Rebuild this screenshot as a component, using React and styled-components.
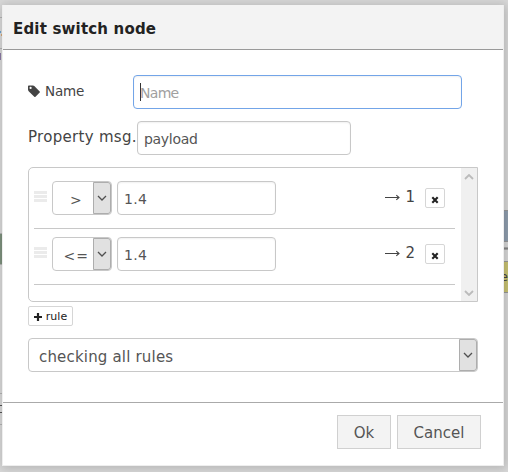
import React from "react";
import styled, { createGlobalStyle } from "styled-components";

const Global = createGlobalStyle`
  *, *::before, *::after { box-sizing: border-box; }
  html, body { margin: 0; height: 472px; overflow: hidden; background: #d8d8d8; }
  body { font-family: Verdana, "DejaVu Sans", sans-serif; font-size: 14px; color: #444; }
`;

const Workspace = styled.main`
  position: relative;
  width: 508px;
  height: 472px;
  padding: 5px 4px 6px 2px;
  overflow: hidden;
  background: #dadada;
`;

const CanvasPiece = styled.span`
  position: absolute;
  left: ${(p) => p.$x}px;
  top: ${(p) => p.$y}px;
  width: ${(p) => p.$w}px;
  height: ${(p) => p.$h}px;
  background: ${(p) => p.$fill || "transparent"};
  border: solid ${(p) => p.$line || "#b4b4b4"};
  border-width: 1px 0;
  font-size: 13px;
  line-height: ${(p) => p.$h - 3}px;
  text-indent: ${(p) => p.$indent || 0}px;
`;

const Dialog = styled.section`
  position: relative;
  display: flex;
  flex-direction: column;
  width: 502px;
  height: 461px;
  background: #fff;
  border: solid #eee;
  border-width: 0 1px 1px;
  box-shadow: 1px 1px 10px 2px rgba(0, 0, 0, 0.17);
`;

const Header = styled.header`
  height: 45px;
  padding: 0 10px;
  background: #f3f3f3;
  border-bottom: 1px solid #999;
`;

const Title = styled.h1`
  margin: 0;
  font-size: 15px;
  line-height: 48px;
  letter-spacing: ${(p) => p.$track || 0}px;
  color: #222;
`;

const Body = styled.div`
  display: flex;
  flex-direction: column;
  height: 352px;
  padding: 25px 25px 0;
`;

const FormRow = styled.div`
  display: flex;
  height: 34px;
  margin-bottom: 12px;
`;

const Label = styled.label`
  display: flex;
  align-items: center;
  width: ${(p) => p.$w}px;
  height: 32px;
  white-space: nowrap;
  font-size: ${(p) => p.$size || 14}px;
  letter-spacing: ${(p) => p.$track || 0}px;
  svg { margin-right: 4px; }
`;

const Field = styled.div`
  display: flex;
  align-items: center;
  width: ${(p) => p.$w}px;
  height: 34px;
  padding: 2px 0 0 6px;
  border: 1px solid ${(p) => (p.$focus ? "#73a5e8" : "#c8c8c8")};
  border-radius: 4px;
  background: #fff;
  box-shadow: inset 0 1px 2px rgba(0, 0, 0, 0.06);
  color: ${(p) => (p.$focus ? "#a0a0a0" : "#555")};
  letter-spacing: ${(p) => p.$track || 0}px;
`;

const Caret = styled.span`
  width: 1px;
  height: 18px;
  margin: -2px -1px 0 0;
  background: #333;
`;

const RuleList = styled.div`
  display: flex;
  width: 450px;
  height: 135px;
  border: 1px solid #c8c8c8;
  border-radius: 5px 0 0 5px;
`;

const Rules = styled.div`
  flex: 1;
  padding: 5px 6px 0 5px;
`;

const Rule = styled.div`
  display: flex;
  align-items: center;
  height: 56px;
  padding-bottom: 5px;
  border-bottom: 1px solid #c8c8c8;
`;

const Grip = styled.span`
  width: 13px;
  height: 11px;
  margin: -4px 5px 0 0;
  background: linear-gradient(#ebebeb 0 3px, transparent 3px 4px, #ebebeb 4px 7px, transparent 7px 8px, #ebebeb 8px 11px);
`;

const Select = styled.div`
  display: flex;
  justify-content: space-between;
  width: ${(p) => p.$w}px;
  height: 34px;
  margin-right: ${(p) => p.$gap || 0}px;
  border: 1px solid #c8c8c8;
  border-radius: 4px;
  background: #fff;
  color: #555;
`;

const SelectText = styled.span`
  padding-left: ${(p) => p.$left}px;
  line-height: 36px;
  font-size: ${(p) => p.$size || 14}px;
  letter-spacing: ${(p) => p.$track || 0}px;
  white-space: nowrap;
`;

const DropArrow = styled.span`
  display: flex;
  align-items: center;
  justify-content: center;
  width: 18px;
  height: 32px;
  padding-bottom: 1px;
  border: 1px solid #adadad;
  border-radius: 0 3px 3px 0;
  background: #e1e1e1;
`;

const Output = styled.span`
  display: flex;
  align-items: center;
  gap: 5px;
  margin: -3px 10px 0 auto;
  font-size: 15px;
`;

const SmallButton = styled.button`
  display: flex;
  align-items: center;
  justify-content: center;
  gap: 4px;
  width: ${(p) => p.$w}px;
  height: 20px;
  padding: ${(p) => p.$top || 0}px 0 0;
  margin: ${(p) => p.$margin || "0"};
  border: 1px solid #d6d6d6;
  border-radius: 2px;
  background: #fff;
  color: #222;
  font: 11px Verdana, "DejaVu Sans", sans-serif;
`;

const ScrollBar = styled.div`
  display: flex;
  flex-direction: column;
  align-items: center;
  justify-content: space-between;
  width: 16px;
  padding: 6px 0 5px;
  background: #f0f0f0;
`;

const Footer = styled.footer`
  display: flex;
  justify-content: flex-end;
  gap: 6px;
  flex: 1;
  padding: 12px 22px 0;
  border-top: 1px solid #aaa;
`;

const Button = styled.button`
  width: ${(p) => p.$w}px;
  height: 34px;
  padding: 2px 0 0;
  border: 1px solid #d0d0d0;
  background: #f3f3f3;
  color: #555;
  font: 15px Verdana, "DejaVu Sans", sans-serif;
`;

const Tag = () => (
  <svg width="13" height="13" viewBox="0 0 13 13">
    <path fillRule="evenodd" fill="#444" d="M0 1.2Q0 .4.8.4H5Q5.7.4 6.3 1L11.7 6.4Q12.3 7 11.7 7.6L7.5 11.8Q6.9 12.4 6.3 11.8L.9 6.4Q0 5.5 0 4.7ZM2.6 1.8A1.1 1.1 0 1 0 2.6 4 1.1 1.1 0 0 0 2.6 1.8Z" />
  </svg>
);

const Chevron = ({ up, color = "#505050", bold = 1.3 }) => (
  <svg width="10" height="6" viewBox="0 0 10 6">
    <path d={up ? "M1 5 5 1 9 5" : "M1 1 5 5 9 1"} fill="none" stroke={color} strokeWidth={bold} />
  </svg>
);

const Arrow = () => (
  <svg width="15" height="9" viewBox="0 0 15 9">
    <path d="M0 5.5H14M11.3 3.2 14 5.5 11.3 7.8" fill="none" stroke="#444" strokeWidth="1.1" />
  </svg>
);

const Cross = () => (
  <svg width="8" height="8" viewBox="0 0 8 8">
    <path d="M1.3 1.3 6.7 6.7M6.7 1.3 1.3 6.7" stroke="#222" strokeWidth="2.1" />
  </svg>
);

const Plus = () => (
  <svg width="8" height="8" viewBox="0 0 8 8">
    <path d="M4 0V8M0 4H8" stroke="#222" strokeWidth="2.2" />
  </svg>
);

const rules = [
  { op: ">", left: 17, value: "1.4", out: 1 },
  { op: "<=", left: 10.5, track: 1, value: "1.4", out: 2 },
];

export default function App() {
  return (
    <>
      <Global />
      <Workspace>
        <CanvasPiece $x={0} $y={17} $w={2} $h={32} />
        <CanvasPiece $x={0} $y={31} $w={1} $h={2} $line="#6ba3cf" />
        <CanvasPiece $x={1} $y={34} $w={1} $h={2} $line="#d8a875" />
        <CanvasPiece $x={0} $y={53} $w={1} $h={7} $fill="#8c7ba5" $line="#8c7ba5" />
        <CanvasPiece $x={0} $y={233} $w={2} $h={32} $fill="#7e927e" />
        <CanvasPiece $x={0} $y={393} $w={2} $h={32} />
        <CanvasPiece $x={0} $y={405} $w={2} $h={8} $line="#555" />
        <CanvasPiece $x={504} $y={210} $w={4} $h={32} $fill="#91a0b0" $line="#999" />
        <CanvasPiece $x={504} $y={247} $w={4} $h={3} $fill="#888" $line="#aaa" />
        <CanvasPiece $x={504} $y={261} $w={4} $h={32} $fill="#cbc574" $line="#999" $indent={-4}>e</CanvasPiece>
        <Dialog>
          <Header><Title $track={0.18}>Edit switch node</Title></Header>
          <Body>
            <FormRow>
              <Label $w={105} $size={13.5} $track={-0.15}><Tag />Name</Label>
              <Field $w={329} $focus $track={-0.7}><Caret />Name</Field>
            </FormRow>
            <FormRow>
              <Label $w={109} $size={15} $track={0.3}>Property msg.</Label>
              <Field $w={214} $track={-0.3}>payload</Field>
            </FormRow>
            <RuleList>
              <Rules>
                {rules.map((r) => (
                  <Rule key={r.out}>
                    <Grip />
                    <Select $w={60} $gap={5}>
                      <SelectText $left={r.left} $track={r.track}>{r.op}</SelectText>
                      <DropArrow><Chevron /></DropArrow>
                    </Select>
                    <Field $w={159} $track={0.3}>{r.value}</Field>
                    <Output><Arrow />{r.out}</Output>
                    <SmallButton $w={20} $top={3} $margin="0 10px 0 0"><Cross /></SmallButton>
                  </Rule>
                ))}
              </Rules>
              <ScrollBar>
                <Chevron up color="#bbb" bold={1.8} />
                <Chevron color="#bbb" bold={1.8} />
              </ScrollBar>
            </RuleList>
            <SmallButton $w={45} $top={1} $margin="4px 0 12px"><Plus />rule</SmallButton>
            <Select $w={450}>
              <SelectText $left={10} $size={15} $track={0.18}>checking all rules</SelectText>
              <DropArrow><Chevron /></DropArrow>
            </Select>
          </Body>
          <Footer>
            <Button $w={54}>Ok</Button>
            <Button $w={84}>Cancel</Button>
          </Footer>
        </Dialog>
      </Workspace>
    </>
  );
}
